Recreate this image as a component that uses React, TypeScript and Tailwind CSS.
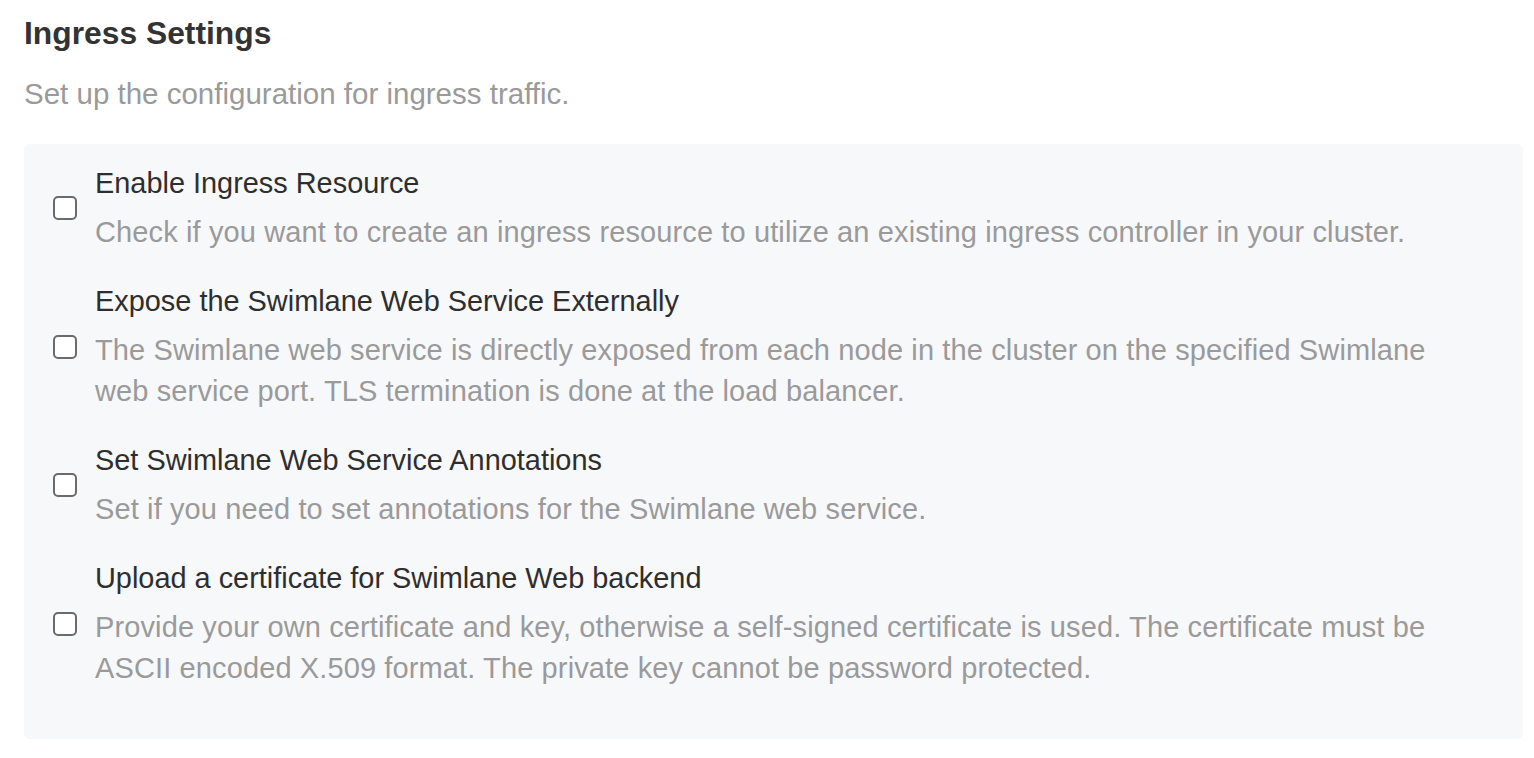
import { useState } from 'react'

const items = [
  {
    label: 'Enable Ingress Resource',
    description:
      'Check if you want to create an ingress resource to utilize an existing ingress controller in your cluster.',
  },
  {
    label: 'Expose the Swimlane Web Service Externally',
    description:
      'The Swimlane web service is directly exposed from each node in the cluster on the specified Swimlane web service port. TLS termination is done at the load balancer.',
  },
  {
    label: 'Set Swimlane Web Service Annotations',
    description: 'Set if you need to set annotations for the Swimlane web service.',
  },
  {
    label: 'Upload a certificate for Swimlane Web backend',
    description:
      'Provide your own certificate and key, otherwise a self-signed certificate is used. The certificate must be ASCII encoded X.509 format. The private key cannot be password protected.',
  },
]

function Checkbox({ checked, onChange }: { checked: boolean; onChange: () => void }) {
  return (
    <button
      type="button"
      onClick={onChange}
      className={`w-[24px] h-[24px] shrink-0 rounded-[5px] border-[2px] border-[#6b6b6b] ${
        checked ? 'bg-[#3b82f6]' : 'bg-white'
      }`}
    />
  )
}

export default function App() {
  const [checked, setChecked] = useState<boolean[]>([false, false, false, false])

  return (
    <div
      className="min-h-screen bg-white pl-[24px] pr-[11px] pt-[15px]"
      style={{ fontFamily: '"Liberation Sans", Arial, sans-serif' }}
    >
      <h2 className="text-[31.8px] leading-[36px] font-bold text-[#333333]">Ingress Settings</h2>
      <p className="mt-[23px] text-[29.5px] leading-[40px] text-[#9a9a9a]">
        Set up the configuration for ingress traffic.
      </p>

      <div className="mt-[30px] rounded-[6px] bg-[#f7f8fa] pl-[29px] pr-[20px] pt-[19px] pb-[50px] flex flex-col gap-[28px]">
        {items.map((item, i) => (
          <div key={item.label} className="flex items-center gap-[18px]">
            <Checkbox
              checked={checked[i]}
              onChange={() => setChecked(c => c.map((v, j) => (j === i ? !v : v)))}
            />
            <div className="flex flex-col">
              <div className="text-[28.9px] leading-[41px] text-[#2e2e2e]">{item.label}</div>
              <div className="mt-[8px] text-[29px] tracking-[0.12px] leading-[41px] text-[#9a9a9a] max-w-[1345px]">
                {item.description}
              </div>
            </div>
          </div>
        ))}
      </div>
    </div>
  )
}
